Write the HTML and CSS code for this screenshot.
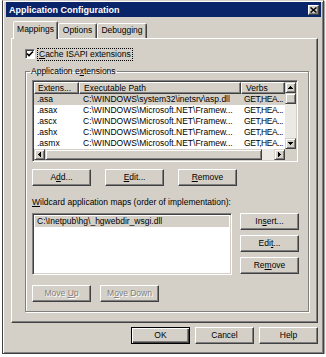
FILE: index.html
```html
<!DOCTYPE html>
<html lang="en">
<head>
    <meta charset="UTF-8">
    <title>Application Configuration</title>
    <link rel="stylesheet" href="styles.css">
</head>
<body>
    <div class="window">
        <div class="titlebar">
            <span>Application Configuration</span>
            <span class="close">
                <svg width="7" height="6" viewBox="0 0 7 6"><path d="M0.5 0.5 L6.5 5.5 M6.5 0.5 L0.5 5.5" stroke="#000" stroke-width="1.5"/></svg>
            </span>
        </div>

        <div class="dialog">
            <div class="tabs">
                <div class="tab active">Mappings</div>
                <div class="tab options">Options</div>
                <div class="tab debugging">Debugging</div>
            </div>

            <div class="panel">
                <div class="check">
                    <span class="box">
                        <svg width="8" height="8" viewBox="0 0 8 8"><path d="M1 3.5 L3 5.5 L7 1.5" fill="none" stroke="#000" stroke-width="1.6"/></svg>
                    </span>
                    <span class="focus"><u>C</u>ache ISAPI extensions</span>
                </div>

                <fieldset class="group">
                    <legend>Application e<u>x</u>tensions</legend>

                    <div class="listview">
                        <div class="lv-main">
                            <div class="lv-row lv-head">
                                <span>Extens...</span>
                                <span>Executable Path</span>
                                <span>Verbs</span>
                            </div>
                            <div class="lv-row sel">
                                <span>.asa</span>
                                <span>C:\WINDOWS\system32\inetsrv\asp.dll</span>
                                <span class="verbs">GET,HEA...</span>
                            </div>
                            <div class="lv-row">
                                <span>.asax</span>
                                <span>C:\WINDOWS\Microsoft.NET\Framew...</span>
                                <span class="verbs">GET,HEA...</span>
                            </div>
                            <div class="lv-row">
                                <span>.ascx</span>
                                <span>C:\WINDOWS\Microsoft.NET\Framew...</span>
                                <span class="verbs">GET,HEA...</span>
                            </div>
                            <div class="lv-row">
                                <span>.ashx</span>
                                <span>C:\WINDOWS\Microsoft.NET\Framew...</span>
                                <span class="verbs">GET,HEA...</span>
                            </div>
                            <div class="lv-row">
                                <span>.asmx</span>
                                <span>C:\WINDOWS\Microsoft.NET\Framew...</span>
                                <span class="verbs">GET,HEA...</span>
                            </div>
                        </div>

                        <div class="vscroll">
                            <span class="sb-btn"><svg width="5" height="3" viewBox="0 0 5 3"><path d="M2 0h1v1h1v1h1v1H0V2h1V1h1z"/></svg></span>
                            <span class="sb-btn"></span>
                            <span class="track"></span>
                            <span class="sb-btn"><svg width="5" height="3" viewBox="0 0 5 3"><path d="M0 0h5v1H4v1H3v1H2V2H1V1H0z"/></svg></span>
                        </div>
                        <div class="hscroll">
                            <span class="sb-btn"><svg width="3" height="5" viewBox="0 0 3 5"><path d="M2 0h1v5H2V4H1V3H0V2h1V1h1z"/></svg></span>
                            <span class="sb-btn hthumb"></span>
                            <span class="track"></span>
                            <span class="sb-btn"><svg width="3" height="5" viewBox="0 0 3 5"><path d="M0 0h1v1h1v1h1v1H2v1H1v1H0z"/></svg></span>
                        </div>
                        <div class="corner"></div>
                    </div>

                    <div class="btn-row">
                        <button class="btn">A<u>d</u>d...</button>
                        <button class="btn"><u>E</u>dit...</button>
                        <button class="btn"><u>R</u>emove</button>
                    </div>

                    <div class="label"><u>W</u>ildcard application maps (order of implementation):</div>

                    <div class="wild">
                        <div class="wild-list">
                            <div class="item">C:\Inetpub\hg\_hgwebdir_wsgi.dll</div>
                        </div>
                        <div class="wild-btns">
                            <button class="btn">In<u>s</u>ert...</button>
                            <button class="btn">Edi<u>t</u>...</button>
                            <button class="btn">Re<u>m</u>ove</button>
                        </div>
                    </div>

                    <div class="btn-row move">
                        <button class="btn" disabled>Move <u>U</u>p</button>
                        <button class="btn" disabled>M<u>o</u>ve Down</button>
                    </div>
                </fieldset>
            </div>

            <div class="footer">
                <button class="btn default">OK</button>
                <button class="btn">Cancel</button>
                <button class="btn">Help</button>
            </div>
        </div>
    </div>
</body>
</html>
```

FILE: styles.css
```css
* {
    box-sizing: border-box;
}
body {
    margin: 0;
    background: #fff;
    font-family: "Liberation Sans", Arial, sans-serif;
    font-size: 8.5px;
    color: #000;
}
u {
    text-decoration: underline;
    text-underline-offset: 1px;
}
.window {
    margin-left: 2px;
    width: 322px;
    height: 354px;
    background: #d4d0c8;
    border: 1px solid #404040;
    border-top-color: #d4d0c8;
    box-shadow: inset 1px 1px #fff, inset -1px -1px #808080, 1px 1px 1px rgba(0,0,0,0.35);
    padding: 1px 2px 0 3px;
}
.titlebar {
    height: 15px;
    background: #0a246a;
    color: #fff;
    font-weight: bold;
    font-size: 9px;
    display: flex;
    align-items: center;
    justify-content: space-between;
    padding: 0 2px 0 3px;
}
.close {
    width: 11px;
    height: 10px;
    background: #d4d0c8;
    border: 1px solid;
    border-color: #fff #404040 #404040 #fff;
    box-shadow: inset -1px -1px #808080;
    display: flex;
    align-items: center;
    justify-content: center;
}
.dialog {
    padding: 4px 3px 0 5px;
}
.tabs {
    display: flex;
    align-items: flex-end;
    height: 17px;
    padding-left: 2px;
    position: relative;
    z-index: 1;
}
.tab {
    height: 15px;
    line-height: 13px;
    text-align: center;
    border: 1px solid;
    border-bottom: none;
    border-color: #fff #404040 transparent #fff;
    box-shadow: inset -1px 0 #808080;
    border-radius: 2px 2px 0 0;
    background: #d4d0c8;
}
.tab.active {
    width: 45px;
    height: 18px;
    line-height: 15px;
    margin-bottom: -1px;
}
.tab.options {
    width: 39px;
}
.tab.debugging {
    width: 50px;
}
.panel {
    height: 285px;
    border: 1px solid;
    border-color: #fff #404040 #404040 #fff;
    box-shadow: inset -1px -1px #808080;
    padding: 8px 8px 0 13px;
}
.check {
    display: flex;
    align-items: center;
    gap: 2px;
    height: 14px;
}
.box {
    width: 10px;
    height: 10px;
    background: #fff;
    border: 1px solid;
    border-color: #808080 #fff #fff #808080;
    box-shadow: inset 1px 1px #404040;
    display: flex;
    align-items: center;
    justify-content: center;
}
.focus {
    border: 1px dotted #000;
    padding: 0 1px;
    line-height: 11px;
}
.group {
    margin: 5px 0 0 0;
    border: 1px solid #808080;
    box-shadow: inset 1px 1px #fff, 1px 1px #fff;
    padding: 3px 9px 9px 6px;
    min-width: 0;
}
.group legend {
    margin-left: -2px;
    padding: 0 1px;
    line-height: 11px;
}
.listview {
    width: 266px;
    height: 82px;
    border: 1px solid;
    border-color: #808080 #fff #fff #808080;
    box-shadow: inset 1px 1px #404040, inset -1px -1px #d4d0c8;
    padding: 1px;
    background: #fff;
    display: grid;
    grid-template-columns: 251px 11px;
    grid-template-rows: 67px 11px;
}
.lv-main {
    overflow: hidden;
}
.lv-row {
    display: grid;
    grid-template-columns: 45px 162px 44px;
    height: 11px;
    line-height: 11px;
    white-space: nowrap;
}
.lv-row span {
    overflow: hidden;
    padding-left: 4px;
}
.lv-row span:first-child {
    padding-left: 3px;
}
.lv-row .verbs {
    padding-left: 3px;
    letter-spacing: -0.45px;
}
.lv-head {
    height: 12px;
    background: #d4d0c8;
}
.lv-head span {
    border: 1px solid;
    border-color: #fff #404040 #404040 #fff;
    box-shadow: inset -1px -1px #808080;
    line-height: 10px;
}
.lv-row.sel {
    background: #d4d0c8;
}
.vscroll {
    display: flex;
    flex-direction: column;
}
.hscroll {
    display: flex;
}
.sb-btn {
    width: 11px;
    height: 11px;
    flex: none;
    background: #d4d0c8;
    border: 1px solid;
    border-color: #d4d0c8 #404040 #404040 #d4d0c8;
    box-shadow: inset 1px 1px #fff, inset -1px -1px #808080;
    display: flex;
    align-items: center;
    justify-content: center;
}
.hthumb {
    width: 217px;
}
.track {
    flex: 1;
    background: #ebe9e4;
}
.corner {
    background: #d4d0c8;
}
.btn {
    width: 59px;
    height: 17px;
    padding: 0;
    background: #d4d0c8;
    border: 1px solid;
    border-color: #fff #404040 #404040 #fff;
    box-shadow: inset -1px -1px #808080;
    font-family: inherit;
    font-size: 8.5px;
    color: #000;
    text-align: center;
    line-height: 15px;
}
.btn:disabled {
    color: #808080;
    text-shadow: 1px 1px #fff;
}
.btn.default {
    border-color: #000;
    box-shadow: inset 1px 1px #fff, inset -1px -1px #404040, inset -2px -2px #808080;
}
.btn-row {
    display: flex;
    gap: 14px;
    margin-top: 7px;
}
.label {
    margin-top: 11px;
    line-height: 11px;
}
.wild {
    display: flex;
    gap: 8px;
    margin-top: 5px;
}
.wild-list {
    width: 200px;
    height: 62px;
    background: #fff;
    border: 1px solid;
    border-color: #808080 #fff #fff #808080;
    box-shadow: inset 1px 1px #404040, inset -1px -1px #d4d0c8;
    padding: 2px;
}
.item {
    background: #d4d0c8;
    line-height: 11px;
    padding-left: 2px;
}
.wild-btns {
    display: flex;
    flex-direction: column;
    gap: 5px;
}
.btn-row.move {
    gap: 9px;
    margin-top: 10px;
}
.footer {
    display: flex;
    justify-content: flex-end;
    gap: 5px;
    margin-top: 4px;
}
```
